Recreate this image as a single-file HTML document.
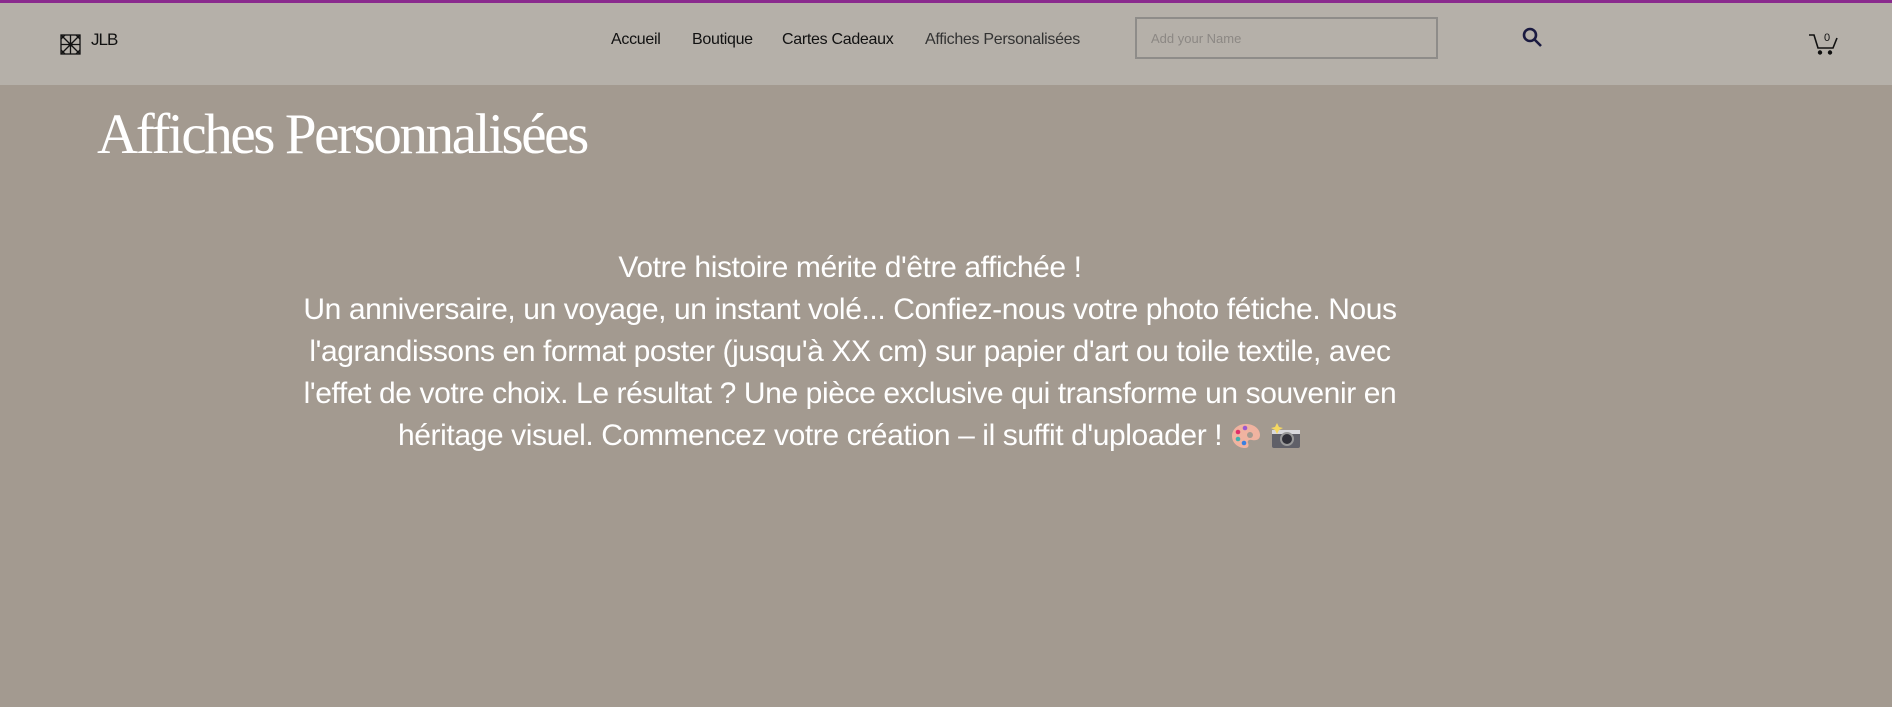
<!DOCTYPE html>
<html><head><meta charset="utf-8"><style>
html,body{margin:0;padding:0;width:1892px;height:707px;overflow:hidden;background:#a39a90;font-family:"Liberation Sans",sans-serif;}
.top{position:absolute;left:0;top:0;width:1892px;height:3px;background:#8a2a8e;}
.hdr{position:absolute;left:0;top:3px;width:1892px;height:82px;background:#b5b0a9;}
.nav{position:absolute;top:31px;font-size:16px;color:#111;letter-spacing:-0.3px;}
.inp{position:absolute;left:1135px;top:17px;border:2px solid #8e8c89;box-sizing:border-box;width:303px;height:42px;}
.inp span{position:absolute;left:14px;top:12px;font-size:13px;color:#8c8884;}
h1{position:absolute;left:97px;top:106px;margin:0;font-family:"Liberation Serif",serif;font-weight:normal;font-size:57px;color:#fff;letter-spacing:-2.4px;line-height:1;}
.p{position:absolute;left:0;width:1700px;top:247px;text-align:center;color:#fff;font-size:30px;line-height:42px;letter-spacing:-0.4px;}
</style></head><body>
<div class="top"></div>
<div class="hdr"></div>
<svg style="position:absolute;left:60px;top:34px" width="21" height="21" viewBox="0 0 21 21" fill="none" stroke="#111" stroke-width="1.3">
<rect x="1" y="1" width="19" height="19"/><path d="M1 1L20 20M20 1L1 20M10.5 1V20M1 10.5H20M1 5L5 1M16 1L20 5M1 16L5 20M16 20L20 16"/><circle cx="10.5" cy="10.5" r="1.5" fill="#111"/></svg>
<div style="position:absolute;left:91px;top:30px;font-size:17px;color:#111;letter-spacing:-1px">JLB</div>
<div class="nav" style="left:611px">Accueil</div>
<div class="nav" style="left:692px">Boutique</div>
<div class="nav" style="left:782px">Cartes Cadeaux</div>
<div class="nav" style="left:925px;color:#333">Affiches Personalisées</div>
<div class="inp"><span>Add your Name</span></div>
<svg style="position:absolute;left:1522px;top:27px" width="21" height="20" viewBox="0 0 21 20" fill="none" stroke="#1a1a40" stroke-width="2.6"><circle cx="8" cy="8" r="6"/><path d="M12.5 12.5L19 19"/></svg>
<svg style="position:absolute;left:1808px;top:30px" width="32" height="26" viewBox="0 0 32 26" fill="none" stroke="#111" stroke-width="1.6"><path d="M1 5H6L10 18H25L29 8"/><circle cx="12" cy="22.5" r="1.4" fill="#111"/><circle cx="22" cy="22.5" r="1.4" fill="#111"/><text x="16" y="11" font-size="11" fill="#111" stroke="none" font-family="Liberation Sans">0</text></svg>
<h1>Affiches Personnalisées</h1>
<div class="p">Votre histoire mérite d'être affichée !<br>Un anniversaire, un voyage, un instant volé... Confiez-nous votre photo fétiche. Nous<br>l'agrandissons en format poster (jusqu'à XX cm) sur papier d'art ou toile textile, avec<br>l'effet de votre choix. Le résultat ? Une pièce exclusive qui transforme un souvenir en<br>héritage visuel. Commencez votre création – il suffit d'uploader ! <svg width="32" height="28" viewBox="0 0 32 28" style="vertical-align:-5px"><path d="M16 2C7 2 2 8 2 14c0 7 6 12 13 12 4 0 4-3 3-5s1-4 4-3c5 1 8-1 8-5 0-6-6-11-14-11z" fill="#f0b3a0"/><circle cx="20" cy="13" r="3" fill="#a39a90"/><circle cx="15" cy="6" r="2.3" fill="#9b59d0"/><circle cx="8" cy="10" r="2.3" fill="#e0306a"/><circle cx="8" cy="17" r="2.3" fill="#40b0b0"/><circle cx="14" cy="21" r="2.3" fill="#3a80e0"/></svg> <svg width="32" height="28" viewBox="0 0 32 28" style="vertical-align:-5px"><rect x="2" y="8" width="28" height="18" rx="2" fill="#606068"/><rect x="2" y="8" width="28" height="4" fill="#d8d8dc"/><circle cx="17" cy="17" r="7" fill="#999"/><circle cx="17" cy="17" r="5" fill="#303038"/><path d="M7 1l2 4 4 1-4 2-2 4-2-4-4-2 4-1z" fill="#f5d860"/></svg></div>
</body></html>
